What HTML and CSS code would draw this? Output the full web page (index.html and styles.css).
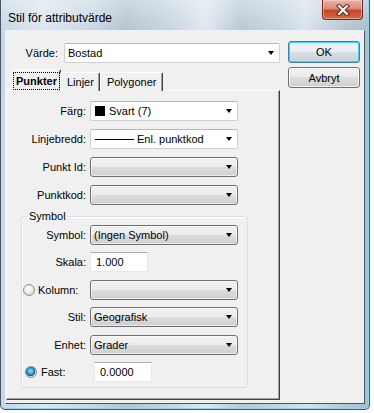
FILE: index.html
```html
<!DOCTYPE html>
<html lang="sv">

<head>
  <meta charset="UTF-8">
  <title>Stil för attributvärde</title>
  <link rel="stylesheet" href="styles.css">
</head>

<body>
  <div class="window">
    <div class="titlebar">
      <span class="title">Stil för attributvärde</span>
      <button class="close" aria-label="Stäng">
        <svg width="14" height="12" viewBox="0 0 14 12">
          <path d="M3 2 L11 10 M11 2 L3 10" stroke="#5a2419" stroke-width="4.2" stroke-linecap="square" />
          <path d="M3 2 L11 10 M11 2 L3 10" stroke="#fff" stroke-width="2.2" stroke-linecap="square" />
        </svg>
      </button>
    </div>

    <div class="client">
      <div class="main">
        <div class="value-row">
          <label class="value-label">Värde:</label>
          <div class="combo combo-edit value-combo"><span>Bostad</span><i class="arrow"></i></div>
        </div>

        <div class="tabs">
          <div class="tab active"><span class="focus">Punkter</span></div>
          <div class="tab">Linjer</div>
          <div class="tab">Polygoner</div>
        </div>

        <div class="panel">
          <div class="rows">
            <div class="row">
              <span class="lbl">Färg:</span>
              <div class="combo combo-edit"><span class="swatch"></span><span>Svart (7)</span><i class="arrow"></i></div>
            </div>
            <div class="row">
              <span class="lbl">Linjebredd:</span>
              <div class="combo combo-edit"><span class="line-sample"></span><span>Enl. punktkod</span><i class="arrow"></i></div>
            </div>
            <div class="row">
              <span class="lbl">Punkt Id:</span>
              <div class="combo combo-list"><span></span><i class="arrow"></i></div>
            </div>
            <div class="row">
              <span class="lbl">Punktkod:</span>
              <div class="combo combo-list"><span></span><i class="arrow"></i></div>
            </div>
          </div>

          <fieldset class="group">
            <legend>Symbol</legend>
            <div class="group-rows">
              <div class="row">
                <span class="lbl">Symbol:</span>
                <div class="combo combo-list"><span>(Ingen Symbol)</span><i class="arrow"></i></div>
              </div>
              <div class="row">
                <span class="lbl">Skala:</span>
                <div class="textbox">1.000</div>
              </div>
              <div class="row">
                <span class="lbl lbl-radio"><i class="radio"></i>Kolumn:</span>
                <div class="combo combo-list"><span></span><i class="arrow"></i></div>
              </div>
              <div class="row">
                <span class="lbl">Stil:</span>
                <div class="combo combo-list"><span>Geografisk</span><i class="arrow"></i></div>
              </div>
              <div class="row">
                <span class="lbl">Enhet:</span>
                <div class="combo combo-list"><span>Grader</span><i class="arrow"></i></div>
              </div>
              <div class="row row-fast">
                <span class="lbl lbl-radio"><i class="radio checked"></i>Fast:</span>
                <div class="textbox">0.0000</div>
              </div>
            </div>
          </fieldset>
        </div>
      </div>

      <div class="buttons">
        <button class="btn btn-default">OK</button>
        <button class="btn">Avbryt</button>
      </div>
    </div>
  </div>
</body>

</html>
```

FILE: styles.css
```css
body {
  margin: 0;
  background: #fff;
  font-family: "Liberation Sans", Arial, sans-serif;
  font-size: 11px;
  color: #000;
}

.window {
  box-sizing: border-box;
  width: 370px;
  height: 410px;
  display: flex;
  flex-direction: column;
  padding: 0 4px 5px 4px;
  border: 1px solid #4a5866;
  border-top: none;
  border-radius: 0 0 5px 5px;
  box-shadow: inset -1px -1px 0 #8fd3ee;
  background:
    linear-gradient(180deg, rgba(255, 255, 255, .35), rgba(255, 255, 255, 0) 30px),
    linear-gradient(90deg, #c8d7e4 0, #dce6ef 40px, #cad8e4 90px, #b4c4d2 125px, #c5d3df 165px, #dfe8f0 205px, #b8c8d6 240px, #c8d6e2 280px, #d8e3ec 305px, #b9c9d6 340px, #a8bccc 370px);
}

.titlebar {
  height: 30px;
  display: flex;
  align-items: flex-start;
  justify-content: space-between;
}

.title {
  font-size: 12px;
  margin: 11px 0 0 3px;
}

.close {
  width: 41px;
  height: 20px;
  margin: 0 2px 0 0;
  padding: 0;
  display: flex;
  align-items: center;
  justify-content: center;
  border: 1px solid #6a2b22;
  border-top: none;
  border-radius: 0 0 4px 4px;
  background: linear-gradient(180deg, #e9b4a8 0, #dc8a78 45%, #c8452b 55%, #cf6a48 100%);
  box-shadow: inset 0 0 0 1px rgba(255, 220, 210, .5);
}

.client {
  flex: 1;
  display: flex;
  gap: 8px;
  padding: 11px 4px 3px 0;
  background: #f0f0f0;
  border: 1px solid;
  border-color: #eef2f6 #4a5866 #4a5866 #eef2f6;
}

.main {
  width: 274px;
  display: flex;
  flex-direction: column;
}

.value-row {
  display: flex;
  align-items: center;
  height: 22px;
}

.value-label {
  width: 52px;
  text-align: right;
  margin-right: 6px;
}

.value-combo {
  flex: 1;
  height: 22px;
}

/* combo boxes */

.combo {
  box-sizing: border-box;
  width: 148px;
  height: 20px;
  display: flex;
  align-items: center;
  padding: 0 5px 0 3px;
  border-radius: 2px;
}

.combo-edit {
  background: #fff;
  border: 1px solid #cdd0d5;
  border-top-color: #b5b8be;
}

.combo-list {
  border: 1px solid #707070;
  border-radius: 3px;
  background: linear-gradient(180deg, #f2f2f2 0, #ebebeb 50%, #dddddd 50%, #cfcfcf 100%);
  box-shadow: inset 0 0 0 1px rgba(255, 255, 255, .6);
}

.arrow {
  margin-left: auto;
  border-left: 3.5px solid transparent;
  border-right: 3.5px solid transparent;
  border-top: 4px solid #000;
}

.swatch {
  width: 10px;
  height: 10px;
  background: #000;
  margin: 0 4px 0 1px;
}

.line-sample {
  width: 39px;
  height: 1px;
  background: #000;
  margin: 0 3px 0 1px;
}

.textbox {
  box-sizing: border-box;
  width: 58px;
  height: 20px;
  display: flex;
  align-items: center;
  padding-left: 5px;
  background: #fff;
  border: 1px solid #e3e9ef;
  border-top-color: #abadb3;
}

/* tabs */

.tabs {
  display: flex;
  align-items: flex-end;
  height: 21px;
  margin-top: 6px;
  padding-left: 6px;
  position: relative;
  z-index: 1;
  margin-bottom: -1px;
}

.tab {
  box-sizing: border-box;
  height: 19px;
  display: flex;
  align-items: center;
  padding: 0 6px;
  border-top: 1px solid #fff;
  border-left: 1px solid #fff;
  border-right: 1px solid #404040;
  box-shadow: inset -1px 0 0 #a0a0a0;
  border-radius: 2px 2px 0 0;
  background: #f0f0f0;
}

.tab.active {
  height: 22px;
  padding: 0 2px 0 2px;
  font-weight: bold;
  margin-right: -1px;
}

.tab:nth-child(2) {
  padding: 0 5px 0 6px;
}

.focus {
  padding: 1px 1px;
  outline: 1px dotted #000;
  outline-offset: 1px;
}

.panel {
  flex: 1;
  display: flex;
  flex-direction: column;
  border-top: 1px solid #fff;
  border-left: 1px solid #fff;
  border-right: 1px solid #404040;
  border-bottom: 1px solid #404040;
  box-shadow: inset -1px -1px 0 #a0a0a0;
  padding-top: 10px;
}

.rows {
  display: flex;
  flex-direction: column;
  gap: 8px;
}

.row {
  display: flex;
  align-items: center;
}

.lbl {
  width: 79px;
  margin-right: 4px;
  text-align: right;
}

/* group box */

.group {
  margin: 5px 0 0 14px;
  width: 227px;
  box-sizing: border-box;
  padding: 2px 0 5px 0;
  border: 1px solid #d5dfe5;
  border-radius: 3px;
  box-shadow: inset 1px 1px 0 #fff;
}

.group legend {
  padding: 0 2px;
  margin-left: 5px;
  line-height: 13px;
}

.group-rows {
  display: flex;
  flex-direction: column;
  gap: 7.4px;
}

.group .lbl {
  width: 64px;
}

.group .lbl-radio {
  text-align: left;
  display: flex;
  align-items: center;
  gap: 3px;
  padding-left: 1px;
  width: 63px;
}

.group .row-fast .lbl-radio {
  width: 63px;
  padding-left: 3px;
  gap: 4px;
}

.row-fast .textbox {
  margin-left: 2px;
  padding-left: 5px;
}

.radio {
  box-sizing: border-box;
  width: 12px;
  height: 12px;
  border-radius: 50%;
  border: 1px solid #8e8f8f;
  background: radial-gradient(circle at 40% 35%, #ffffff 0, #e6e6e6 55%, #cfcfcf 100%);
}

.radio.checked {
  background:
    radial-gradient(circle at 45% 40%, #9fe3ff 0, #1c8ed0 45%, #0a4e8c 60%, transparent 62%),
    radial-gradient(circle, #f4f4f4 0, #d0d0d0 100%);
}

/* buttons */

.buttons {
  display: flex;
  flex-direction: column;
  gap: 4px;
  padding-top: 0;
  margin-top: -1px;
}

.btn {
  box-sizing: border-box;
  width: 72px;
  height: 21px;
  padding: 0;
  font-family: inherit;
  font-size: 11px;
  color: #000;
  border: 1px solid #707070;
  border-radius: 3px;
  background: linear-gradient(180deg, #f2f2f2 0, #ebebeb 50%, #dddddd 50%, #cfcfcf 100%);
  box-shadow: inset 0 0 0 1px rgba(255, 255, 255, .7);
}

.btn-default {
  height: 22px;
  border-color: #3c7fb1;
  background: linear-gradient(180deg, #f0f3f5 0, #e8eef2 50%, #d6dfe5 50%, #c8d3db 100%);
  box-shadow: inset 0 0 0 1px #48d0f8;
}
```
